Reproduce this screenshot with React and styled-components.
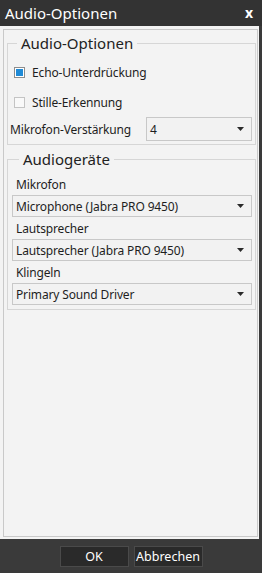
import styled, { createGlobalStyle } from "styled-components";

const GlobalStyle = createGlobalStyle`
  html, body {
    margin: 0;
    padding: 0;
    background: #3a3a3a;
  }
  body {
    font-family: "Noto Sans", "Open Sans", sans-serif;
  }
`;

const Window = styled.div`
  display: flex;
  flex-direction: column;
  width: 262px;
  height: 573px;
  background: #3a3a3a;
`;

const TitleBar = styled.div`
  display: flex;
  align-items: center;
  justify-content: space-between;
  height: 26px;
  padding: 0 9px 0 5px;
  background: #333333;
  color: #ffffff;
  font-size: 15px;
  flex-shrink: 0;
`;

const CloseButton = styled.span`
  font-size: 14px;
  font-weight: bold;
  line-height: 1;
`;

const Body = styled.div`
  display: flex;
  flex: 1;
  min-height: 0;
  padding: 3px 0 2px 3px;
  background: #f3f3f3;
  border-right: 3px solid #3a3a3a;
`;

const Frame = styled.div`
  display: flex;
  flex-direction: column;
  flex: 1;
  border: 1px solid #c9c9c9;
  margin-right: 1px;
  padding: 3px 1px 0 3px;
`;

const Group = styled.fieldset`
  margin: ${(p) => (p.$first ? "0" : "4px 0 0")};
  padding: 0 3px ${(p) => p.$pb}px ${(p) => p.$pl}px;
  border: 1px solid #d6d6d6;
  min-width: 0;
`;

const Legend = styled.legend`
  margin-left: 7px;
  padding: 0 4px;
  font-size: 15px;
  line-height: 20px;
  color: #222;
`;

const CheckRow = styled.label`
  display: flex;
  align-items: center;
  gap: 7px;
  height: 30px;
  padding-left: 4px;
  font-size: 12px;
  letter-spacing: -0.15px;
  color: #1e1e1e;
  margin-top: ${(p) => (p.$first ? "4px" : "0")};
`;

const Box = styled.span`
  box-sizing: border-box;
  width: 11px;
  height: 11px;
  border: 1px solid ${(p) => (p.$checked ? "#8d8d8d" : "#c4c4c4")};
  background: ${(p) => (p.$checked ? "#1f8ad6" : "#f9f9f9")};
  box-shadow: ${(p) => (p.$checked ? "inset 0 0 0 1px #fff" : "none")};
`;

const InlineRow = styled.div`
  display: flex;
  align-items: center;
  justify-content: space-between;
  height: 24px;
`;

const FieldLabel = styled.div`
  font-size: 12px;
  letter-spacing: -0.15px;
  color: #1e1e1e;
  padding-left: ${(p) => p.$indent || 0}px;
  height: ${(p) => p.$h || "auto"}px;
  display: flex;
  align-items: center;
`;

const Select = styled.div`
  box-sizing: border-box;
  display: flex;
  align-items: center;
  justify-content: space-between;
  width: ${(p) => p.$width || "100%"};
  height: ${(p) => p.$h}px;
  padding: 0 7px 0 3px;
  border: 1px solid #c8c8c8;
  background: #f2f2f2;
  font-size: 12px;
  letter-spacing: -0.15px;
  color: #1e1e1e;
`;

const Arrow = () => (
  <svg width="7" height="4" viewBox="0 0 7 4">
    <path d="M0 0 H7 L3.5 4 Z" fill="#2a2a2a" />
  </svg>
);

const Footer = styled.div`
  display: flex;
  justify-content: center;
  gap: 5px;
  height: 34px;
  padding-top: 7px;
  box-sizing: border-box;
  background: #3a3a3a;
  flex-shrink: 0;
`;

const Button = styled.button`
  width: 69px;
  height: 21px;
  padding: 0;
  background: #2a2a2a;
  border: 1px solid #4a4a4a;
  color: #ffffff;
  font-family: inherit;
  font-size: 12.5px;
`;

const devices = [
  { label: "Mikrofon", value: "Microphone (Jabra PRO 9450)" },
  { label: "Lautsprecher", value: "Lautsprecher (Jabra PRO 9450)" },
  { label: "Klingeln", value: "Primary Sound Driver" },
];

export default function App() {
  return (
    <>
      <GlobalStyle />
      <Window>
        <TitleBar>
          <span>Audio-Optionen</span>
          <CloseButton>x</CloseButton>
        </TitleBar>
        <Body>
          <Frame>
            <Group $first $pl={2} $pb={3}>
              <Legend>Audio-Optionen</Legend>
              <CheckRow $first>
                <Box $checked />
                Echo-Unterdrückung
              </CheckRow>
              <CheckRow>
                <Box />
                Stille-Erkennung
              </CheckRow>
              <InlineRow>
                <FieldLabel>Mikrofon-Verstärkung</FieldLabel>
                <Select $width="106px" $h={24}>
                  4
                  <Arrow />
                </Select>
              </InlineRow>
            </Group>
            <Group $pl={4} $pb={4}>
              <Legend>Audiogeräte</Legend>
              <div style={{ height: 4 }} />
              {devices.map((d) => (
                <div key={d.label}>
                  <FieldLabel $indent={4} $h={22}>
                    {d.label}
                  </FieldLabel>
                  <Select $h={22}>
                    {d.value}
                    <Arrow />
                  </Select>
                </div>
              ))}
            </Group>
          </Frame>
        </Body>
        <Footer>
          <Button>OK</Button>
          <Button>Abbrechen</Button>
        </Footer>
      </Window>
    </>
  );
}
